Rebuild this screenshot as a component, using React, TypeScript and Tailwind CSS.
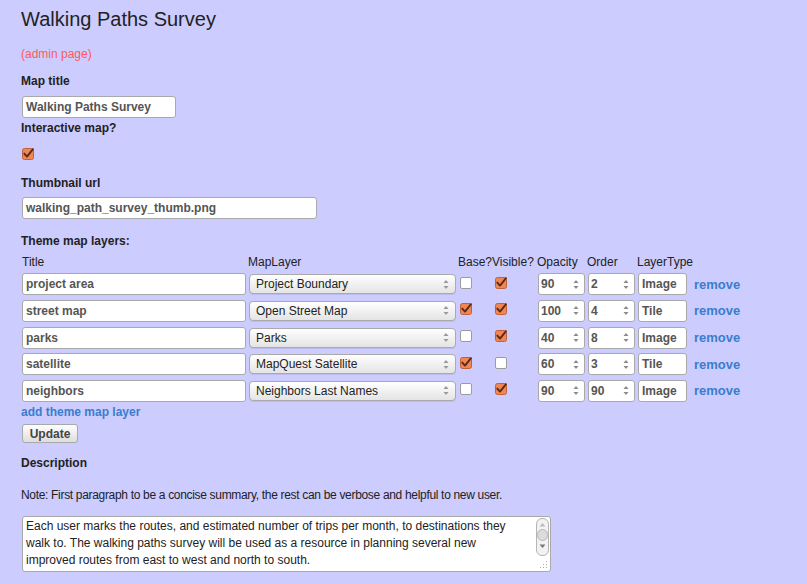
import React from "react";

type Row = { title: string; layer: string; base: boolean; vis: boolean; op: string; ord: string; type: string };

const rows: Row[] = [
  { title: "project area", layer: "Project Boundary", base: false, vis: true, op: "90", ord: "2", type: "Image" },
  { title: "street map", layer: "Open Street Map", base: true, vis: true, op: "100", ord: "4", type: "Tile" },
  { title: "parks", layer: "Parks", base: false, vis: true, op: "40", ord: "8", type: "Image" },
  { title: "satellite", layer: "MapQuest Satellite", base: true, vis: false, op: "60", ord: "3", type: "Tile" },
  { title: "neighbors", layer: "Neighbors Last Names", base: false, vis: true, op: "90", ord: "90", type: "Image" },
];

function Box({ checked }: { checked: boolean }) {
  if (checked) {
    return (
      <svg width="12" height="12" viewBox="0 0 12 12" className="block overflow-visible">
        <rect x="0.5" y="0.5" width="11" height="11" rx="2" fill="#ef8654" stroke="#c0603a" />
        <path d="M2.3 5.6 L5 8.6 L11 1.2" fill="none" stroke="#5a2a18" strokeWidth="1.9" strokeLinecap="round" strokeLinejoin="round" />
      </svg>
    );
  }
  return <span className="block w-[12px] h-[12px] rounded-[2px] border border-[#9c9c9c] bg-white" />;
}

function Spin({ color = "#8a8a8a" }: { color?: string }) {
  return (
    <svg width="6" height="11" viewBox="0 0 6 11" className="block shrink-0">
      <path d="M0.5 4 L3 1 L5.5 4Z" fill={color} />
      <path d="M0.5 7 L3 10 L5.5 7Z" fill={color} />
    </svg>
  );
}

function TextBox({ value, w }: { value: string; w: string }) {
  return (
    <div className={`${w} h-[22px] flex items-center border border-[#a9a9a9] rounded-[3px] bg-white pl-[3px] text-[12px] font-bold text-[#555] whitespace-nowrap overflow-hidden`}>
      {value}
    </div>
  );
}

function NumBox({ value }: { value: string }) {
  return (
    <div className="w-[47px] h-[22px] flex items-center justify-between border border-[#a9a9a9] rounded-[3px] bg-white pl-[2px] pr-[5px] text-[12px] font-bold text-[#555]">
      <span>{value}</span>
      <Spin />
    </div>
  );
}

function SelectBox({ value }: { value: string }) {
  return (
    <div className="w-[207px] h-[20px] flex items-center justify-between border border-[#aaaaaa] rounded-[4px] bg-gradient-to-b from-white to-[#e4e4e4] pl-[6px] pr-[6px] text-[12px] text-[#222] shadow-[0_1px_0_rgba(0,0,0,0.08)]">
      <span>{value}</span>
      <Spin color="#999" />
    </div>
  );
}

export default function App() {
  return (
    <div className="min-h-screen bg-[#ccccff] font-['Liberation_Sans',Arial,sans-serif] text-[#222] pl-[21px] pb-[11px] overflow-hidden">
      <h1 className="pt-[8px] text-[20px] leading-[23px] font-normal">Walking Paths Survey</h1>
      <p className="mt-[16px] text-[12px] leading-[14px] text-[#ff5a5a]">(admin page)</p>

      <div className="mt-[13px] text-[12px] leading-[14px] font-bold">Map title</div>
      <div className="mt-[8px] ml-px">
        <TextBox value="Walking Paths Survey" w="w-[154px]" />
      </div>

      <div className="mt-[3px] text-[12px] leading-[14px] font-bold">Interactive map?</div>
      <div className="mt-[13px] ml-px">
        <Box checked />
      </div>

      <div className="mt-[16px] text-[12px] leading-[14px] font-bold">Thumbnail url</div>
      <div className="mt-[7px] ml-px">
        <TextBox value="walking_path_survey_thumb.png" w="w-[295px]" />
      </div>

      <div className="mt-[15px] text-[12px] leading-[14px] font-bold">Theme map layers:</div>

      <div className="mt-[7px] grid grid-cols-[226px_210px_34px_45px_50px_50px_56px_auto] text-[12px] leading-[14px] whitespace-nowrap">
        <div className="pl-px">Title</div>
        <div className="pl-px">MapLayer</div>
        <div className="pl-px">Base?</div>
        <div className="pl-px">Visible?</div>
        <div className="pl-px">Opacity</div>
        <div className="pl-px">Order</div>
        <div className="pl-px">LayerType</div>
        <div />
      </div>

      <div className="mt-[2px] flex flex-col">
        {rows.map((r) => (
          <div key={r.title} className="h-[26.67px] grid grid-cols-[226px_210px_34px_45px_50px_50px_56px_auto] items-center">
            <div className="pl-px">
              <TextBox value={r.title} w="w-[224px]" />
            </div>
            <div className="pl-[2px]">
              <SelectBox value={r.layer} />
            </div>
            <div className="pl-[3px] mb-[3px]">
              <Box checked={r.base} />
            </div>
            <div className="pl-[4px] mb-[3px]">
              <Box checked={r.vis} />
            </div>
            <div className="pl-[2px]">
              <NumBox value={r.op} />
            </div>
            <div className="pl-[2px]">
              <NumBox value={r.ord} />
            </div>
            <div className="pl-[2px]">
              <TextBox value={r.type} w="w-[49px]" />
            </div>
            <div className="pl-[2px] text-[13px] font-bold text-[#3a7dcc]">remove</div>
          </div>
        ))}
      </div>

      <div className="mt-px text-[12px] leading-[14px] font-bold text-[#3a7dcc]">add theme map layer</div>
      <div className="mt-[5px] ml-px">
        <div className="w-[56px] h-[19px] flex items-center justify-center border border-[#a9a9a9] rounded-[3px] bg-gradient-to-b from-white to-[#dddddd] text-[12px] font-bold text-[#444]">
          Update
        </div>
      </div>

      <div className="mt-[13px] text-[12px] leading-[14px] font-bold">Description</div>
      <p className="mt-[18px] text-[12px] leading-[14px] tracking-[-0.32px]">
        Note: First paragraph to be a concise summary, the rest can be verbose and helpful to new user.
      </p>

      <div className="mt-[14px] ml-px relative w-[529px] h-[56px] border border-[#a9a9a9] rounded-[3px] bg-white">
        <div className="pl-[3px] pr-[30px] pt-px text-[12px] leading-[17px] text-[#222]">
          Each user marks the routes, and estimated number of trips per month, to destinations they walk to. The walking paths survey will be used as a resource in planning several new improved routes from east to west and north to south.
        </div>
        <div className="absolute right-[1px] top-[1px] w-[13px] h-[38px] rounded-[6px] border border-[#b5b5b5] bg-[#f2f2f2] flex flex-col items-center">
          <svg width="7" height="5" viewBox="0 0 7 5" className="mt-[3px]">
            <path d="M0.5 4.5 L3.5 1 L6.5 4.5Z" fill="#bbb" />
          </svg>
          <span className="mt-[2px] block w-[11px] h-[12px] rounded-full border border-[#b8b8b8] bg-[#dcdcdc]" />
          <svg width="7" height="5" viewBox="0 0 7 5" className="mt-[3px]">
            <path d="M0.5 0.5 L3.5 4 L6.5 0.5Z" fill="#777" />
          </svg>
        </div>
        <svg width="9" height="9" viewBox="0 0 9 9" className="absolute right-[2px] bottom-[2px]">
          <g fill="#b0b0b0">
            <rect x="7" y="1" width="1" height="1" />
            <rect x="4" y="4" width="1" height="1" />
            <rect x="7" y="4" width="1" height="1" />
            <rect x="1" y="7" width="1" height="1" />
            <rect x="4" y="7" width="1" height="1" />
            <rect x="7" y="7" width="1" height="1" />
          </g>
        </svg>
      </div>
    </div>
  );
}
